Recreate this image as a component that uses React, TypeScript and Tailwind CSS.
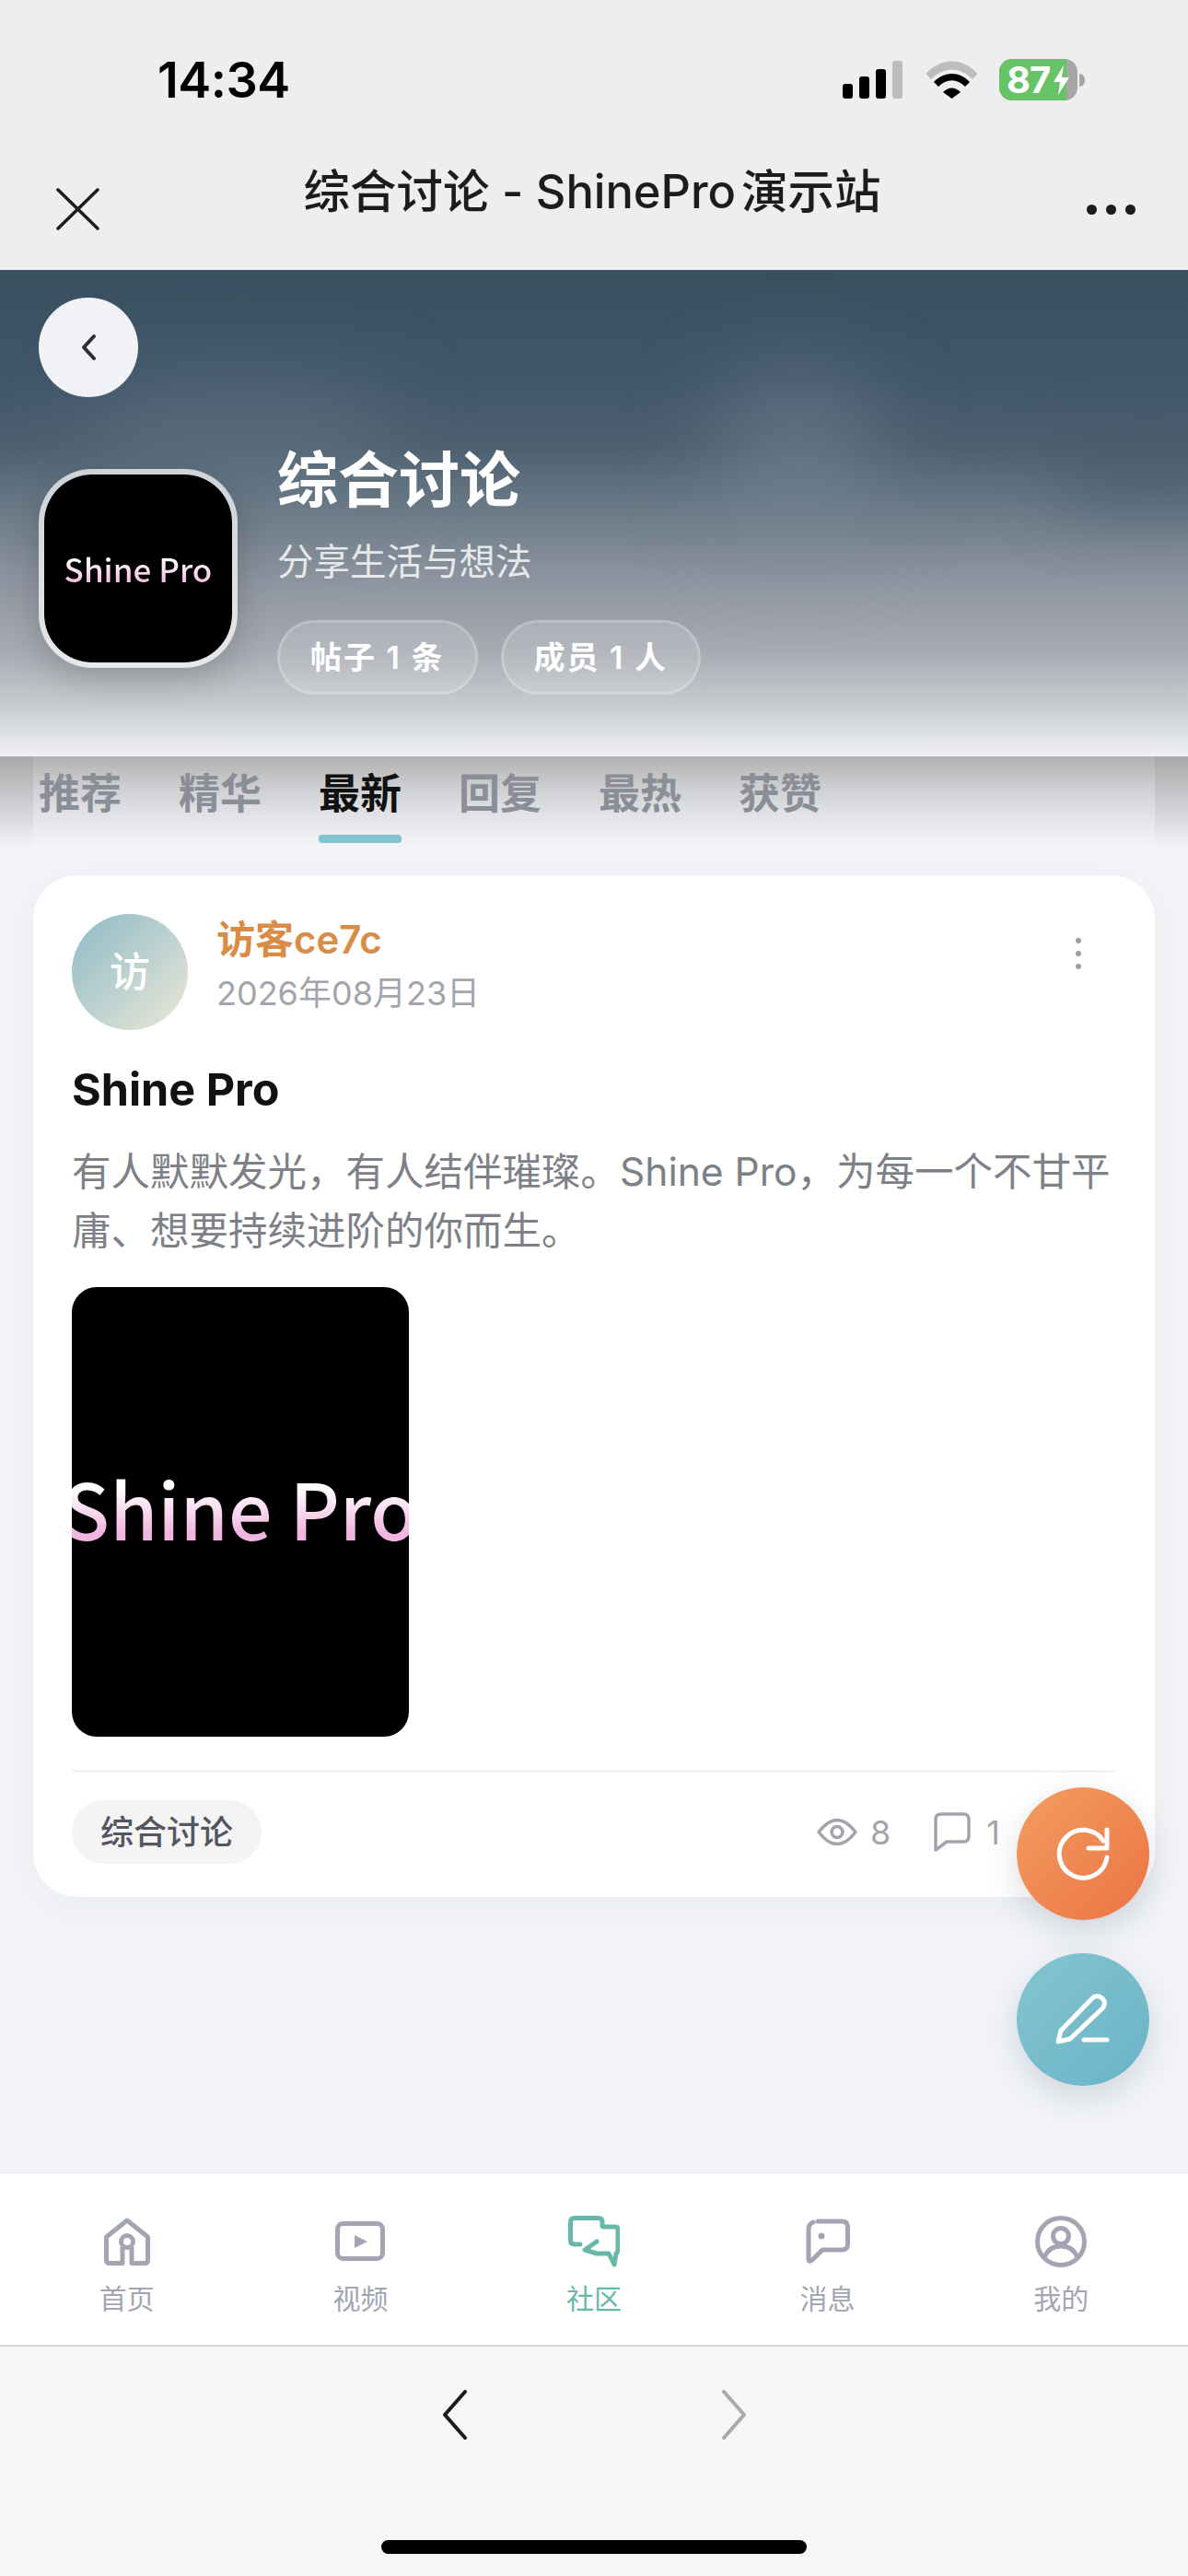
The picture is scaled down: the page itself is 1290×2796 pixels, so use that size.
import React from 'react';

const FONT = 'font-["Inter","Noto_Sans_CJK_SC",sans-serif]';

const GRAY = '#a3a6b2';
const GREEN = '#68b8a9';

const tabs = ['推荐', '精华', '最新', '回复', '最热', '获赞'];

const StatusIcons = () => (
  <div className="flex items-center">
    <div className="flex items-end gap-[7px] h-[41px]">
      <div className="w-[11px] h-[16px] rounded-[3px] bg-black" />
      <div className="w-[11px] h-[24px] rounded-[3px] bg-black" />
      <div className="w-[11px] h-[32px] rounded-[3px] bg-black" />
      <div className="w-[11px] h-[41px] rounded-[3px] bg-[#bdbdbd]" />
    </div>
    <svg width="57" height="41" viewBox="0 0 57 41" className="ml-[25px]">
      <path d="M0.5 14 C17 -4 40 -4 56.5 14 L51 20 C37 6 20 6 6 20 Z" fill="#bdbdbd" />
      <path d="M9 23 C20 11 37 11 48 23 L43 28 C34 19 23 19 14 28 Z" fill="#000" />
      <path d="M19 34 C25 28 32 28 38 34 L28.5 41 Z" fill="#000" />
    </svg>
    <div className="ml-[23px] relative w-[85px] h-[45px] rounded-[14px] bg-[#a6a6a6]">
      <div className="h-full w-[73px] rounded-l-[14px] bg-[#66c466]" />
      <span className="absolute left-[8px] top-0 leading-[45px] text-[40px] font-bold tracking-[-1px] text-white">87</span>
      <svg width="17" height="32" viewBox="0 0 17 32" className="absolute left-[59px] top-[7px]">
        <path d="M11 0 L0 18 H7 L5 32 L17 13 H9 Z" fill="#fff" />
      </svg>
    </div>
    <div className="ml-[2px] w-[6px] h-[14px] rounded-r-[6px] bg-[#a6a6a6]" />
  </div>
);

const TopBar = () => (
  <header className="h-[293px] shrink-0 bg-[#eeeeee] flex flex-col">
    <div className="h-[64px] shrink-0" />
    <div className="flex justify-between pl-[171px] pr-[112px] h-[45px]">
      <span className="text-[54px] leading-[45px] font-semibold tracking-[-0.5px] text-black">14:34</span>
      <StatusIcons />
    </div>
    <div className="flex items-start justify-between pl-[61px] pr-[57px] pt-[95px]">
      <svg width="47" height="46" viewBox="0 0 47 46">
        <path d="M2 2 L45 44 M45 2 L2 44" stroke="#1c1c1c" strokeWidth="3.5" strokeLinecap="round" />
      </svg>
      <div className="flex gap-[10px] pt-[18px]">
        <div className="w-[11px] h-[11px] rounded-full bg-[#1c1c1c]" />
        <div className="w-[11px] h-[11px] rounded-full bg-[#1c1c1c]" />
        <div className="w-[11px] h-[11px] rounded-full bg-[#1c1c1c]" />
      </div>
    </div>
    <div className="absolute left-0 top-[178px] w-[1286px] text-center text-[50.5px] leading-[60px] font-medium text-[#1c1c1c]">
      综合讨论 - ShinePro<span className="ml-[6px]">演示站</span>
    </div>
  </header>
);

const ShineLogo = () => (
  <span className='font-["Noto_Sans_CJK_SC",sans-serif] font-medium text-[35px] leading-[50px] whitespace-nowrap bg-gradient-to-b from-white from-30% to-[#f0b5e0] to-85% bg-clip-text text-transparent'>
    Shine Pro
  </span>
);

const Hero = () => (
  <section className="relative h-[528px] shrink-0 overflow-hidden bg-[linear-gradient(180deg,#39505f_0%,#41566a_22%,#4c6070_36%,#6c7b88_50%,#8e95a0_64%,#a8acb3_79%,#cdd0d5_91%,#eff1f5_100%)]">
    <div className="absolute left-[780px] top-[110px] w-[170px] h-[190px] rounded-full bg-[#7a8a98]/50 blur-[50px]" />
    <div className="absolute left-[100px] top-[120px] w-[320px] h-[130px] rounded-full bg-[#6d7f8d]/40 blur-[50px]" />
    <div className="absolute left-[1150px] top-[190px] w-[200px] h-[70px] rounded-full bg-[#3f5464]/50 blur-[36px]" />
    <div className="relative pl-[42px] pt-[30px]">
      <div className="w-[108px] h-[108px] rounded-full bg-[#f1f2f5] flex items-center justify-center">
        <svg width="20" height="30" viewBox="0 0 20 30">
          <path d="M16 3 L5 15 L16 27" fill="none" stroke="#2e2e30" strokeWidth="4" strokeLinecap="round" strokeLinejoin="round" />
        </svg>
      </div>
      <div className="flex mt-[50px]">
        <div className="mt-[28px] w-[216px] h-[216px] shrink-0 rounded-[58px] border-[6px] border-white/70 bg-black bg-clip-padding flex items-center justify-center shadow-[0_12px_36px_rgba(0,0,0,0.18)]">
          <ShineLogo />
        </div>
        <div className="ml-[43px] flex flex-col items-start">
          <h1 className="text-[66px] leading-[80px] font-bold text-white">综合讨论</h1>
          <p className="mt-[23px] text-[39.5px] leading-[52px] text-white/80">分享生活与想法</p>
          <div className="mt-[37px] flex gap-[25px]">
            <div className="h-[81px] px-[33px] flex items-center rounded-full border-[3px] border-white/20 bg-white/15 text-[34px] font-semibold tracking-[2px] text-white">帖子 1 条</div>
            <div className="h-[81px] px-[33px] flex items-center rounded-full border-[3px] border-white/20 bg-white/15 text-[34px] font-semibold tracking-[2px] text-white">成员 1 人</div>
          </div>
        </div>
      </div>
    </div>
  </section>
);

const Tabs = () => (
  <div className="relative h-[129px] shrink-0">
    <div className="absolute left-0 top-0 w-full h-[100px] bg-gradient-to-b from-[#a8a8aa] to-[#f2f4f8]" />
    <div className="absolute left-[36px] right-[36px] top-0 h-[115px] bg-gradient-to-b from-white/10 to-[#f2f4f8]/60" />
    <div className="relative flex gap-[62px] pl-[42px] pt-[13px]">
      {tabs.map((t) => (
        <div key={t} className="flex flex-col items-center">
          <span className={`text-[45px] leading-[56px] font-semibold ${t === '最新' ? 'text-[#111111]' : 'text-[#8b8e96]'}`}>{t}</span>
          {t === '最新' && <div className="mt-[16px] w-[90px] h-[9px] rounded-[4px] bg-[#82c3cf]" />}
        </div>
      ))}
    </div>
  </div>
);

const PostCard = () => (
  <article className="mx-[36px] h-[1109px] rounded-[48px] bg-white px-[42px] pt-[42px] shadow-[0_10px_40px_rgba(30,40,60,0.04)] flex flex-col">
    <div className="flex">
      <div className="w-[126px] h-[126px] rounded-full bg-gradient-to-br from-[#8dbac6] to-[#ebe8d8] flex items-center justify-center text-[44px] font-medium text-white">访</div>
      <div className="ml-[31px] flex-1 flex flex-col pt-[2px]">
        <span className="text-[42px] leading-[52px] font-semibold text-[#d98c45]">访客ce7c</span>
        <span className="mt-[7px] text-[36px] leading-[50px] text-[#a3a5ad]">2026年08月23日</span>
      </div>
      <div className="flex flex-col gap-[8px] pt-[26px] pr-[38px]">
        <div className="w-[6px] h-[6px] rounded-full bg-[#9ea0a8]" />
        <div className="w-[6px] h-[6px] rounded-full bg-[#9ea0a8]" />
        <div className="w-[6px] h-[6px] rounded-full bg-[#9ea0a8]" />
      </div>
    </div>
    <h2 className="mt-[33px] text-[48.5px] leading-[64px] font-bold text-[#111111]">Shine Pro</h2>
    <p className="mt-[25px] text-[42.5px] leading-[64px] text-[#7e8087]">有人默默发光，有人结伴璀璨。Shine Pro，为每一个不甘平庸、想要持续进阶的你而生。</p>
    <div className="mt-[29px] w-[366px] h-[488px] shrink-0 rounded-[27px] bg-black overflow-hidden flex justify-center">
      <span className='mt-[169px] h-[140px] font-["Noto_Sans_CJK_SC",sans-serif] font-medium text-[84px] leading-[140px] whitespace-nowrap bg-gradient-to-b from-white from-35% to-[#f0b5e0] to-70% bg-clip-text text-transparent'>Shine Pro</span>
    </div>
    <div className="mt-[36px] h-[3px] shrink-0 bg-[#f4f4f5]" />
    <div className="mt-[30px] flex items-center">
      <span className="h-[69px] px-[31px] rounded-full bg-[#f4f4f5] flex items-center text-[36px] font-medium text-[#55555f]">综合讨论</span>
      <div className="ml-[603px] flex items-center text-[36px] text-[#a3a5ad]">
        <svg width="44" height="29" viewBox="0 0 44 29">
          <path d="M2 14.5 C10 4 16 1.5 22 1.5 S34 4 42 14.5 C34 25 28 27.5 22 27.5 S10 25 2 14.5 Z" fill="none" stroke="#a3a5ad" strokeWidth="3.5" strokeLinejoin="round" />
          <circle cx="22" cy="14.5" r="6" fill="none" stroke="#a3a5ad" strokeWidth="3.5" />
        </svg>
        <span className="ml-[14px]">8</span>
        <svg width="40" height="44" viewBox="0 0 40 44" className="ml-[47px]">
          <path d="M8 2 H32 Q38 2 38 8 V26 Q38 32 32 32 H14 L2 41 V8 Q2 2 8 2 Z" fill="none" stroke="#a3a5ad" strokeWidth="3.5" strokeLinejoin="round" />
        </svg>
        <span className="ml-[17px]">1</span>
      </div>
    </div>
  </article>
);

const Fabs = () => (
  <div className="absolute left-[1104px] top-[1940px] flex flex-col gap-[36px]">
    <div className="w-[144px] h-[144px] rounded-full bg-gradient-to-br from-[#f39d63] to-[#eb7343] flex items-center justify-center shadow-[0_12px_36px_rgba(40,50,70,0.16)]">
      <svg width="64" height="64" viewBox="0 0 64 64">
        <path d="M54 18 A26 26 0 1 0 58 36" fill="none" stroke="#fff" strokeWidth="5" strokeLinecap="round" />
        <path d="M58 6 V26 H38" fill="none" stroke="#fff" strokeWidth="5" strokeLinecap="round" strokeLinejoin="round" />
      </svg>
    </div>
    <div className="w-[144px] h-[144px] rounded-full bg-gradient-to-br from-[#85c4d0] to-[#6ab4c7] flex items-center justify-center shadow-[0_12px_36px_rgba(40,50,70,0.16)]">
      <svg width="64" height="64" viewBox="0 0 64 64">
        <path d="M5 56 L8 44 L42 9 Q47 4 53 9 Q58 14 53 20 L18 53 Z" fill="none" stroke="#fff" strokeWidth="5" strokeLinejoin="round" />
        <path d="M33 54 H58" fill="none" stroke="#fff" strokeWidth="5" strokeLinecap="round" />
      </svg>
    </div>
  </div>
);

const navItems = [
  {
    label: '首页',
    icon: (
      <svg width="50" height="52" viewBox="0 0 50 52" fill="none" stroke={GRAY} strokeWidth="5" strokeLinejoin="round">
        <path d="M20 32 V49.5 H6 Q2.5 49.5 2.5 46 V21 L25 3 L47.5 21 V46 Q47.5 49.5 44 49.5 H30 V32" />
        <circle cx="25" cy="26" r="6.5" />
      </svg>
    ),
  },
  {
    label: '视频',
    icon: (
      <svg width="54" height="44" viewBox="0 0 54 44">
        <rect x="2.5" y="2.5" width="49" height="38" rx="6" fill="none" stroke={GRAY} strokeWidth="5" />
        <path d="M21 15 L35 22 L21 29 Z" fill={GRAY} />
      </svg>
    ),
  },
  {
    label: '社区',
    active: true,
    icon: (
      <svg width="56" height="56" viewBox="0 0 56 56" fill="none" stroke={GREEN} strokeWidth="5" strokeLinejoin="round" strokeLinecap="round">
        <path d="M37 11 V7 Q37 2.5 33 2.5 H7 Q2.5 2.5 2.5 7 V27 Q2.5 31 7 31 H13" />
        <path d="M31 28 L18 37 L31 41 H44 L50 53 L52 41 Q54 40 54 37 V15 Q54 12 51 12 H38" />
      </svg>
    ),
  },
  {
    label: '消息',
    icon: (
      <svg width="48" height="50" viewBox="0 0 48 50">
        <path d="M13 3 H39 Q45.5 3 45.5 9 V28 Q45.5 34 39 34 H18 L7 45 Q3 48 3 44 V12 Q3 6 8 4" fill="none" stroke={GRAY} strokeWidth="5" strokeLinejoin="round" strokeLinecap="round" />
        <circle cx="17" cy="19" r="3.5" fill={GRAY} />
      </svg>
    ),
  },
  {
    label: '我的',
    icon: (
      <svg width="56" height="56" viewBox="0 0 56 56" fill="none" stroke={GRAY} strokeWidth="5">
        <circle cx="28" cy="28" r="25.5" />
        <circle cx="28" cy="22" r="8.5" />
        <path d="M10 46 Q14 33 28 33 Q42 33 46 46" />
      </svg>
    ),
  },
];

const BottomNav = () => (
  <nav className="h-[190px] shrink-0 bg-white border-t-[2px] border-b-[2px] border-t-[#ecedf0] border-b-[#d6d6d6] grid grid-cols-5 px-[11px]">
    {navItems.map((item) => (
      <div key={item.label} className="flex flex-col items-center">
        <div className="h-[64px] mt-[42px] flex items-center justify-center">{item.icon}</div>
        <span className={`mt-[12px] text-[30px] leading-[36px] ${item.active ? 'text-[#68b8a9]' : 'text-[#a3a6b2]'}`}>{item.label}</span>
      </div>
    ))}
  </nav>
);

const BrowserBar = () => (
  <footer className="h-[249px] shrink-0 bg-[#f6f6f6] flex flex-col items-center">
    <div className="flex gap-[275px] mt-[47px]">
      <svg width="28" height="54" viewBox="0 0 28 54">
        <path d="M25 2 L3 27 L25 52" fill="none" stroke="#1c1c1c" strokeWidth="4" strokeLinecap="round" strokeLinejoin="round" />
      </svg>
      <svg width="28" height="54" viewBox="0 0 28 54">
        <path d="M3 2 L25 27 L3 52" fill="none" stroke="#aaaaaa" strokeWidth="4" strokeLinecap="round" strokeLinejoin="round" />
      </svg>
    </div>
    <div className="mt-[109px] w-[462px] h-[15px] rounded-full bg-black" />
  </footer>
);

export default function App() {
  return (
    <div className={`relative w-[1290px] h-[2796px] overflow-hidden bg-[#f2f4f8] flex flex-col ${FONT}`}>
      <TopBar />
      <Hero />
      <Tabs />
      <main className="flex-1 min-h-0">
        <PostCard />
      </main>
      <Fabs />
      <BottomNav />
      <BrowserBar />
    </div>
  );
}
